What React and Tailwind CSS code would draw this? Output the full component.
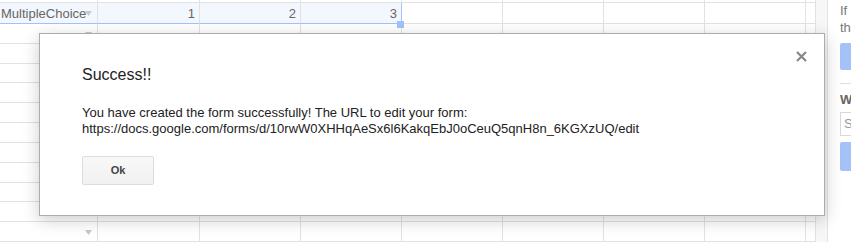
import React from 'react';

const COLS = [98, 102, 101, 101, 101, 101, 101, 101, 10];
const ARIAL = { fontFamily: '"Liberation Sans", Arial, sans-serif' };

const Arrow = () => (
  <svg width="7" height="5" viewBox="0 0 7 5" className="absolute right-[5px] top-[8px]">
    <path d="M0 0h7L3.5 5z" fill="#c9c9c9" />
  </svg>
);

// one sheet row; the selected one is tinted blue across the first four columns
const Row = ({ selected, cells = [], arrow }) => (
  <div className="flex h-[21px]">
    {COLS.map((w, i) => {
      const inSel = selected && i < 4;
      return (
        <div
          key={i}
          style={{ width: w }}
          className={`relative shrink-0 h-full border-b border-r ${inSel ? 'bg-[#f3f7fe] border-b-[#a1c2fa]' : 'border-b-[#e2e2e2]'} ${selected && i === 3 ? 'border-r-[#a1c2fa]' : 'border-r-[#e2e2e2]'} text-[13px] leading-[21px] text-[#666] ${i === 0 ? 'pl-[1px]' : 'text-right pr-[4px]'}`}
        >
          {cells[i]}
          {i === 0 && arrow && <Arrow />}
        </div>
      );
    })}
  </div>
);

export default function App() {
  return (
    <div className="relative w-[851px] h-[242px] overflow-hidden bg-white flex" style={ARIAL}>
      {/* sheet grid */}
      <div className="w-[816px] shrink-0 flex flex-col">
        <div className="h-[3px] border-b border-[#e2e2e2] shrink-0 flex">
          {COLS.map((w, i) => (
            <div key={i} style={{ width: w }} className="shrink-0 h-full border-r border-[#e2e2e2]" />
          ))}
        </div>
        <div className="relative">
          <Row selected cells={['MultipleChoice', '1', '2', '3']} arrow />
          <div className="absolute z-10 left-[397px] top-[18px] w-[7px] h-[7px] bg-[#a1c2fa]" />
        </div>
        {Array.from({ length: 11 }).map((_, i) => (
          <Row key={i} arrow />
        ))}
      </div>

      {/* gutter between grid and sidebar */}
      <div className="w-[12px] shrink-0 bg-[#f7f7f7] border-r border-[#e4e4e4]" />

      {/* side panel, mostly cut off */}
      <div className="flex-1 pl-[12px] pt-[2px] text-[13px] text-[#777]">
        <div className="leading-[17px]">If</div>
        <div className="leading-[17px]">th</div>
        <div className="mt-[7px] h-[27px] rounded-l-[2px] bg-[#a4c2f7]" />
        <div className="mt-[13px] border-t border-[#dedede]" />
        <div className="mt-[8px] font-bold text-[#666] leading-[15px]">W</div>
        <div className="mt-[5px] h-[24px] border border-r-0 border-[#d9d9d9] pl-[3px] leading-[22px] text-[#999]">S</div>
        <div className="mt-[6px] h-[29px] rounded-l-[2px] bg-[#a4c2f7]" />
      </div>

      {/* dialog */}
      <div className="absolute z-20 left-[39px] top-[33px] w-[786px] h-[183px] bg-white border border-[#acacac] shadow-[0_4px_16px_rgba(0,0,0,0.2)] pl-[42px] pt-[31px]">
        <button className="absolute right-[17px] top-[17px]">
          <svg width="11" height="11" viewBox="0 0 11 11">
            <path d="M1 1l9 9M10 1l-9 9" stroke="#888" strokeWidth="2.2" />
          </svg>
        </button>
        <h2 className="text-[16px] leading-[20px] text-[#222]">Success!!</h2>
        <p className="mt-[20px] text-[13px] leading-[16px] text-[#222]">
          You have created the form successfully! The URL to edit your form:
          <br />
          https://docs.google.com/forms/d/10rwW0XHHqAeSx6l6KakqEbJ0oCeuQ5qnH8n_6KGXzUQ/edit
        </p>
        <button className="mt-[19px] w-[72px] h-[29px] rounded-[2px] border border-[#dcdcdc] bg-gradient-to-b from-[#f8f8f8] to-[#f1f1f1] text-[11px] font-bold text-[#444]">
          Ok
        </button>
      </div>
    </div>
  );
}
